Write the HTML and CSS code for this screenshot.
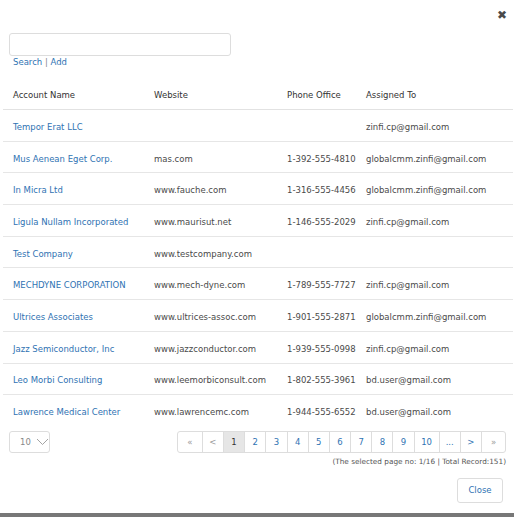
FILE: index.html
```html
<!DOCTYPE html>
<html lang="en">
  <head>
    <meta charset="UTF-8" />
    <meta name="viewport" content="width=device-width, initial-scale=1.0" />
    <title>Accounts</title>
    <link rel="stylesheet" href="styles.css">
  </head>
  <body>
    <div class="modal">
      <div class="modal-top">
        <span class="close-x">&#10006;</span>
      </div>

      <div class="search-box">
        <input type="text" class="search-input" />
        <div class="search-links">
          <a href="#">Search</a> <span class="sep">|</span> <a href="#">Add</a>
        </div>
      </div>

      <table class="accounts">
        <thead>
          <tr>
            <th class="c-name">Account Name</th>
            <th class="c-web">Website</th>
            <th class="c-phone">Phone Office</th>
            <th>Assigned To</th>
          </tr>
        </thead>
        <tbody>
          <tr><td><a href="#">Tempor Erat LLC</a></td><td></td><td></td><td>zinfi.cp@gmail.com</td></tr>
          <tr><td><a href="#">Mus Aenean Eget Corp.</a></td><td>mas.com</td><td>1-392-555-4810</td><td>globalcmm.zinfi@gmail.com</td></tr>
          <tr><td><a href="#">In Micra Ltd</a></td><td>www.fauche.com</td><td>1-316-555-4456</td><td>globalcmm.zinfi@gmail.com</td></tr>
          <tr><td><a href="#">Ligula Nullam Incorporated</a></td><td>www.maurisut.net</td><td>1-146-555-2029</td><td>zinfi.cp@gmail.com</td></tr>
          <tr><td><a href="#">Test Company</a></td><td>www.testcompany.com</td><td></td><td></td></tr>
          <tr><td><a href="#">MECHDYNE CORPORATION</a></td><td>www.mech-dyne.com</td><td>1-789-555-7727</td><td>zinfi.cp@gmail.com</td></tr>
          <tr><td><a href="#">Ultrices Associates</a></td><td>www.ultrices-assoc.com</td><td>1-901-555-2871</td><td>globalcmm.zinfi@gmail.com</td></tr>
          <tr><td><a href="#">Jazz Semiconductor, Inc</a></td><td>www.jazzconductor.com</td><td>1-939-555-0998</td><td>zinfi.cp@gmail.com</td></tr>
          <tr><td><a href="#">Leo Morbi Consulting</a></td><td>www.leemorbiconsult.com</td><td>1-802-555-3961</td><td>bd.user@gmail.com</td></tr>
          <tr><td><a href="#">Lawrence Medical Center</a></td><td>www.lawrencemc.com</td><td>1-944-555-6552</td><td>bd.user@gmail.com</td></tr>
        </tbody>
      </table>

      <div class="pager-row">
        <div class="page-size">
          10
          <svg width="13" height="8" viewBox="0 0 13 8">
            <polyline points="1,1 6.5,6.5 12,1" fill="none" stroke="#999" stroke-width="0.9" />
          </svg>
        </div>
        <ul class="pagination">
          <li class="muted edge">&laquo;</li>
          <li class="muted">&lt;</li>
          <li class="active">1</li>
          <li>2</li>
          <li>3</li>
          <li>4</li>
          <li>5</li>
          <li>6</li>
          <li>7</li>
          <li>8</li>
          <li>9</li>
          <li class="wide">10</li>
          <li>...</li>
          <li>&gt;</li>
          <li class="muted edge">&raquo;</li>
        </ul>
      </div>
      <p class="page-info">(The selected page no: 1/16 | Total Record:151)</p>

      <div class="modal-footer">
        <button type="button" class="close-btn">Close</button>
      </div>
    </div>
    <div class="bottom-bar"></div>
  </body>
</html>
```

FILE: styles.css
```css
body {
  margin: 0;
  background: #fff;
  font-family: "DejaVu Sans", sans-serif;
  font-size: 8.5px;
  color: #4a4a4a;
}

a {
  color: #2f73b3;
  text-decoration: none;
}

.modal {
  height: 513px;
  padding: 0 1px 0 3px;
  box-sizing: border-box;
}

.modal-top {
  display: flex;
  justify-content: flex-end;
  height: 28px;
  padding-right: 6px;
}

.close-x {
  color: #4a4a4a;
  font-size: 12px;
  line-height: 30px;
}

.search-box {
  padding-left: 6px;
  height: 47px;
}

.search-input {
  display: block;
  width: 222px;
  height: 23px;
  box-sizing: border-box;
  border: 1px solid #ddd;
  border-radius: 3px;
  margin: 5px 0 0;
}

.search-links {
  margin: 0 0 0 4px;
  line-height: 12px;
}

.search-links .sep {
  color: #888;
}

.accounts {
  width: 100%;
  border-collapse: collapse;
}

.accounts th {
  font-weight: normal;
  color: #333;
  text-align: left;
  height: 29px;
  padding: 0 10px;
  border-bottom: 1px solid #e2e2e2;
}

.accounts td {
  height: 27.7px;
  padding: 3px 10px 0;
  border-top: 1px solid #e6e6e6;
  white-space: nowrap;
}

.accounts td:nth-child(3) {
  padding-right: 0;
}

.accounts tbody tr:first-child td {
  border-top: none;
}

.c-name {
  width: 121px;
}

.c-web {
  width: 113px;
}

.c-phone {
  width: 59px;
}

.pager-row {
  display: flex;
  justify-content: space-between;
  align-items: center;
  margin-top: 5px;
  padding: 0 7px 0 6px;
}

.page-size {
  display: flex;
  align-items: center;
  gap: 5px;
  width: 41px;
  height: 22px;
  box-sizing: border-box;
  padding-left: 10px;
  border: 1px solid #ddd;
  border-radius: 3px;
  color: #888;
}

.pagination {
  display: flex;
  list-style: none;
  margin: 0;
  padding: 0;
  border: 1px solid #ddd;
  border-radius: 3px;
  height: 22px;
  box-sizing: border-box;
}

.pagination li {
  box-sizing: border-box;
  width: 21.2px;
  text-align: center;
  line-height: 20px;
  color: #2f73b3;
  border-left: 1px solid #ddd;
}

.pagination li:first-child {
  border-left: none;
}

.pagination li.edge {
  width: 24px;
}

.pagination li.wide {
  width: 25px;
}

.pagination li.muted {
  color: #999;
}

.pagination li.active {
  background: #e6e6e6;
  color: #333;
}

.page-info {
  margin: 4px 7px 0 0;
  text-align: right;
  font-size: 7.3px;
  color: #555;
}

.modal-footer {
  display: flex;
  justify-content: flex-end;
  padding: 12px 10px 0 0;
}

.close-btn {
  width: 46px;
  height: 25px;
  background: #fff;
  border: 1px solid #ddd;
  border-radius: 3px;
  color: #2f73b3;
  font-family: inherit;
  font-size: 8.5px;
}

.bottom-bar {
  height: 4px;
  background: #777;
}
```
